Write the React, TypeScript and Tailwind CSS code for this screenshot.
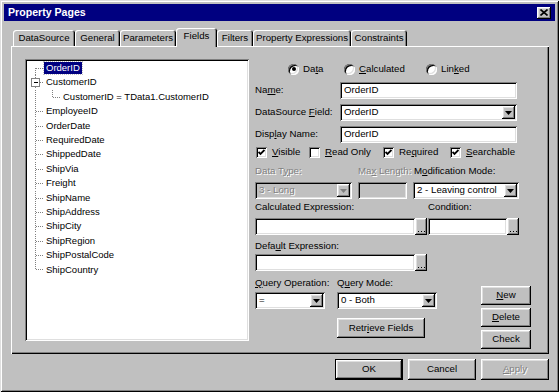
import React from "react";

// win95 bevels
const raised =
  "bg-[#c0c0c0] shadow-[inset_-1px_-1px_#000,inset_1px_1px_#fff,inset_-2px_-2px_#808080,inset_2px_2px_#dfdfdf]";
const sunken =
  "shadow-[inset_1px_1px_#808080,inset_-1px_-1px_#fff,inset_2px_2px_#000,inset_-2px_-2px_#dfdfdf]";
const etched = "text-[#808080] [text-shadow:1px_1px_0_#fff]";

const Arrow = ({ disabled }: { disabled?: boolean }) => (
  <svg width="7" height="4" viewBox="0 0 7 4">
    <polygon points="0,0 7,0 3.5,4" fill={disabled ? "#808080" : "#000"} />
  </svg>
);

const Field = ({ className, value, disabled }: { className: string; value?: string; disabled?: boolean }) => (
  <div
    className={`${sunken} ${disabled ? "bg-[#c0c0c0]" : "bg-white"} h-[17px] flex items-center pl-[4px] ${className}`}
  >
    {value}
  </div>
);

const Combo = ({ className, value, disabled }: { className: string; value: string; disabled?: boolean }) => (
  <div
    className={`${sunken} ${disabled ? "bg-[#c0c0c0]" : "bg-white"} h-[17px] flex items-stretch p-[2px] ${className}`}
  >
    <span className={`flex-1 flex items-center pl-[2px] ${disabled ? etched : ""}`}>{value}</span>
    <div className={`${raised} w-[13px] flex items-center justify-center`}>
      <Arrow disabled={disabled} />
    </div>
  </div>
);

const Dots = () => (
  <div className={`${raised} w-[12px] h-[17px] flex items-end justify-center pb-[3px]`}>
    <svg width="7" height="1">
      <rect x="0" y="0" width="1" height="1" fill="#000" />
      <rect x="3" y="0" width="1" height="1" fill="#000" />
      <rect x="6" y="0" width="1" height="1" fill="#000" />
    </svg>
  </div>
);

const Btn = ({
  className,
  children,
  disabled,
  def,
}: {
  className: string;
  children: React.ReactNode;
  disabled?: boolean;
  def?: boolean;
}) => (
  <div
    className={`${raised} flex items-center justify-center ${className} ${disabled ? etched : ""} ${
      def ? "border border-black" : ""
    }`}
  >
    {children}
  </div>
);

const Check = ({ checked }: { checked?: boolean }) => (
  <div className={`${sunken} bg-white w-[11px] h-[11px] flex items-center justify-center shrink-0`}>
    {checked && (
      <svg width="7" height="7" viewBox="0 0 7 7">
        <path d="M0.5 3 L2.5 5 L6.5 1" stroke="#000" strokeWidth="1.8" fill="none" />
      </svg>
    )}
  </div>
);

const Radio = ({ on }: { on?: boolean }) => (
  <div className={`${sunken} w-[11px] h-[11px] rounded-full bg-white flex items-center justify-center shrink-0`}>
    {on && <div className="w-[4px] h-[4px] rounded-full bg-black" />}
  </div>
);

type Kind = "first" | "mid" | "last" | "parent" | "child";

const Gutter = ({ kind }: { kind: Kind }) => {
  const w = kind === "child" ? 34 : 17;
  const dot = { stroke: "#808080", strokeDasharray: "1 1", shapeRendering: "crispEdges" as const };
  return (
    <svg width={w} height="14.4" className="shrink-0">
      <line x1="8.5" x2="8.5" y1={kind === "first" ? 7 : 0} y2={kind === "last" ? 7.5 : 14.4} {...dot} />
      {kind === "child" ? (
        <>
          <line x1="25.5" x2="25.5" y1="0" y2="7.5" {...dot} />
          <line x1="26" x2="34" y1="7.5" y2="7.5" {...dot} />
        </>
      ) : (
        <line x1={kind === "parent" ? 13 : 9} x2="17" y1="7.5" y2="7.5" {...dot} />
      )}
      {kind === "parent" && (
        <>
          <rect x="4.5" y="3.5" width="8" height="8" fill="#fff" stroke="#808080" shapeRendering="crispEdges" />
          <line x1="6.5" x2="11" y1="7.5" y2="7.5" stroke="#000" shapeRendering="crispEdges" />
        </>
      )}
    </svg>
  );
};

const tree: { label: string; kind: Kind; selected?: boolean }[] = [
  { label: "OrderID", kind: "first", selected: true },
  { label: "CustomerID", kind: "parent" },
  { label: "CustomerID = TData1.CustomerID", kind: "child" },
  { label: "EmployeeID", kind: "mid" },
  { label: "OrderDate", kind: "mid" },
  { label: "RequiredDate", kind: "mid" },
  { label: "ShippedDate", kind: "mid" },
  { label: "ShipVia", kind: "mid" },
  { label: "Freight", kind: "mid" },
  { label: "ShipName", kind: "mid" },
  { label: "ShipAddress", kind: "mid" },
  { label: "ShipCity", kind: "mid" },
  { label: "ShipRegion", kind: "mid" },
  { label: "ShipPostalCode", kind: "mid" },
  { label: "ShipCountry", kind: "last" },
];

const tabs: [string, string][] = [
  ["DataSource", "w-[62px]"],
  ["General", "w-[45px]"],
  ["Parameters", "w-[56px]"],
  ["Fields", "w-[41px]"],
  ["Filters", "w-[36px]"],
  ["Property Expressions", "w-[98px]"],
  ["Constraints", "w-[56px]"],
];

export default function App() {
  return (
    <div
      className={`w-[559px] h-[392px] bg-[#c0c0c0] p-[4px] flex flex-col text-[9.7px] text-black font-['Liberation_Sans',Arial,sans-serif] shadow-[inset_1px_1px_#dfdfdf,inset_-1px_-1px_#000,inset_2px_2px_#fff,inset_-2px_-2px_#808080]`}
    >
      {/* title bar */}
      <div className="h-[17px] bg-[#000080] flex items-center justify-between pl-[4px] pr-[4px]">
        <span className="text-white font-bold text-[10.6px]">Property Pages</span>
        <div className={`${raised} w-[14px] h-[12px] flex items-center justify-center`}>
          <svg width="8" height="7" viewBox="0 0 8 7">
            <path d="M0.5 0.5 L7.5 6.5 M7.5 0.5 L0.5 6.5" stroke="#000" strokeWidth="1.6" />
          </svg>
        </div>
      </div>

      {/* tabs */}
      <div className="h-[25px] flex items-end pl-[9px]">
        {tabs.map(([t, w]) =>
          t === "Fields" ? (
            <div
              key={t}
              className={`${w} h-[19px] mb-[-1px] relative z-10 bg-[#c0c0c0] rounded-t-[3px] flex items-center justify-center pb-[2px] shadow-[inset_1px_1px_#fff,inset_-1px_0_#000,inset_-2px_0_#808080]`}
            >
              {t}
            </div>
          ) : (
            <div
              key={t}
              className={`${w} h-[16px] rounded-t-[3px] flex items-center justify-center pt-[1px] shadow-[inset_1px_1px_#fff,inset_-1px_0_#000,inset_-2px_0_#808080]`}
            >
              {t}
            </div>
          )
        )}
      </div>

      {/* page */}
      <div className="ml-[7px] w-[538px] h-[308px] flex shadow-[inset_1px_1px_#fff,inset_-1px_-1px_#000,inset_-2px_-2px_#808080]">
        <div
          className={`${sunken} bg-white ml-[14px] mt-[13px] w-[224px] h-[282px] p-[2px] overflow-hidden text-[9.5px]`}
        >
          {tree.map((r) => (
            <div key={r.label} className="h-[14.4px] flex items-center whitespace-nowrap">
              <Gutter kind={r.kind} />
              <span
                className={`h-[12px] flex items-center px-[2px] ${
                  r.selected ? "bg-[#000080] text-white outline outline-1 outline-dotted outline-[#c0c0c0]" : ""
                }`}
              >
                {r.label}
              </span>
            </div>
          ))}
        </div>

        <div className="ml-[6px] mt-[16px] w-[276px] flex flex-col">
          <div className="h-[14px] flex items-center pl-[33px]">
            <div className="w-[56px] flex items-center gap-[4px]">
              <Radio on />
              <span>
                Da<u>t</u>a
              </span>
            </div>
            <div className="w-[82px] flex items-center gap-[4px]">
              <Radio />
              <span>
                <u>C</u>alculated
              </span>
            </div>
            <div className="flex items-center gap-[4px]">
              <Radio />
              <span>
                Lin<u>k</u>ed
              </span>
            </div>
          </div>

          <div className="mt-[6px] h-[17px] flex items-center">
            <span className="w-[85px]">
              Na<u>m</u>e:
            </span>
            <Field className="w-[177px]" value="OrderID" />
          </div>
          <div className="mt-[5px] h-[17px] flex items-center">
            <span className="w-[85px]">
              DataSource <u>F</u>ield:
            </span>
            <Combo className="w-[177px]" value="OrderID" />
          </div>
          <div className="mt-[5px] h-[17px] flex items-center">
            <span className="w-[85px]">
              Disp<u>l</u>ay Name:
            </span>
            <Field className="w-[177px]" value="OrderID" />
          </div>

          <div className="mt-[3px] h-[13px] flex items-center pl-[1px]">
            <div className="w-[53px] flex items-center gap-[5px]">
              <Check checked />
              <span>
                <u>V</u>isible
              </span>
            </div>
            <div className="w-[74px] flex items-center gap-[5px]">
              <Check />
              <span>
                <u>R</u>ead Only
              </span>
            </div>
            <div className="w-[67px] flex items-center gap-[5px]">
              <Check checked />
              <span>
                Re<u>q</u>uired
              </span>
            </div>
            <div className="flex items-center gap-[5px]">
              <Check checked />
              <span>
                <u>S</u>earchable
              </span>
            </div>
          </div>

          <div className="mt-[6px] h-[12px] flex items-center whitespace-nowrap">
            <span className={`w-[103px] ${etched}`}>
              Data T<u>y</u>pe:
            </span>
            <span className={`w-[56px] overflow-hidden ${etched}`}>
              Ma<u>x</u> Length:
            </span>
            <span>
              M<u>o</u>dification Mode:
            </span>
          </div>
          <div className="mt-[5px] h-[17px] flex items-center">
            <Combo className="w-[97px]" value="3 - Long" disabled />
            <Field className="w-[49px] ml-[6px]" disabled />
            <Combo className="w-[106px] ml-[6px]" value="2 - Leaving control" />
          </div>

          <div className="mt-[2px] h-[12px] flex items-center">
            <span className="w-[173px]">Calculated Expression:</span>
            <span>Condition:</span>
          </div>
          <div className="mt-[5px] h-[17px] flex items-center">
            <Field className="w-[160px]" />
            <Dots />
            <Field className="w-[79px] ml-[1px]" />
            <Dots />
          </div>

          <div className="mt-[5px] h-[12px] flex items-center">
            <span>
              Defa<u>u</u>lt Expression:
            </span>
          </div>
          <div className="mt-[2px] h-[17px] flex items-center">
            <Field className="w-[160px]" />
            <Dots />
          </div>

          <div className="flex">
            <div className="w-[226px] flex flex-col">
              <div className="mt-[6px] h-[12px] flex items-center">
                <span className="w-[82px]">
                  <u>Q</u>uery Operation:
                </span>
                <span>
                  Q<u>u</u>ery Mode:
                </span>
              </div>
              <div className="mt-[3px] h-[17px] flex items-center">
                <Combo className="w-[70px]" value="=" />
                <Combo className="w-[100px] ml-[12px]" value="0 - Both" />
              </div>
              <div className="mt-[9px] pl-[82px]">
                <Btn className="w-[88px] h-[20px]">
                  <span>
                    Retr<u>i</u>eve Fields
                  </span>
                </Btn>
              </div>
            </div>
            <div className="mt-[15px] flex flex-col gap-[3px]">
              <Btn className="w-[50px] h-[19px]">
                <span>
                  <u>N</u>ew
                </span>
              </Btn>
              <Btn className="w-[50px] h-[19px]">
                <span>
                  <u>D</u>elete
                </span>
              </Btn>
              <Btn className="w-[50px] h-[19px]">Check</Btn>
            </div>
          </div>
        </div>
      </div>

      {/* dialog buttons */}
      <div className="mt-[5px] w-[545px] flex justify-end gap-[5px]">
        <Btn className="w-[68px] h-[21px]" def>
          OK
        </Btn>
        <Btn className="w-[68px] h-[21px]">Cancel</Btn>
        <Btn className="w-[68px] h-[21px]" disabled>
          <span>
            <u>A</u>pply
          </span>
        </Btn>
      </div>
    </div>
  );
}
